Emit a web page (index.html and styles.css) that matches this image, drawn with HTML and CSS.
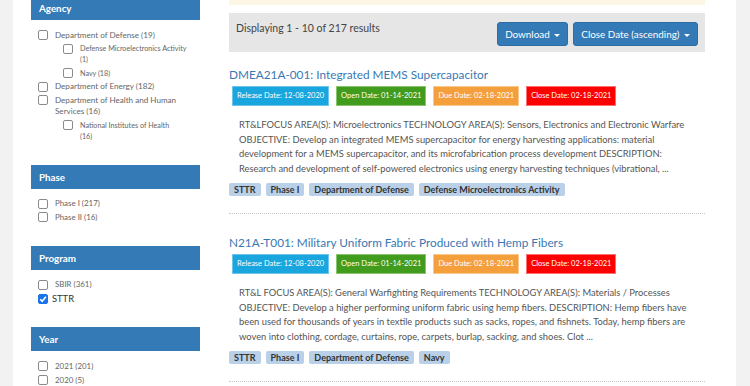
FILE: index.html
```html
<!DOCTYPE html>
<html>
<head>
  <title>Topic Search</title>
  <link rel="stylesheet" href="styles.css">
</head>
<body>

<div class="page">
  <div class="sidebar">

    <div class="panel panel-first">
      <div class="panel-heading">Agency</div>
      <ul class="facet">
        <li><span class="box"></span>Department of Defense (19)
          <ul class="facet sub">
            <li><span class="box"></span>Defense Microelectronics Activity<br>(1)</li>
            <li><span class="box"></span>Navy (18)</li>
          </ul>
        </li>
        <li><span class="box"></span>Department of Energy (182)</li>
        <li><span class="box"></span>Department of Health and Human Services (16)
          <ul class="facet sub">
            <li><span class="box"></span>National Institutes of Health<br>(16)</li>
          </ul>
        </li>
      </ul>
    </div>

    <div class="panel">
      <div class="panel-heading">Phase</div>
      <ul class="facet small">
        <li><span class="box"></span>Phase I (217)</li>
        <li><span class="box"></span>Phase II (16)</li>
      </ul>
    </div>

    <div class="panel">
      <div class="panel-heading">Program</div>
      <ul class="facet small">
        <li><span class="box"></span>SBIR (361)</li>
        <li class="checked"><span class="box"><svg viewBox="0 0 10 10" width="10" height="10"><path d="M2.2 5.2 L4.2 7.2 L7.9 2.8" fill="none" stroke="#fff" stroke-width="1.6"/></svg></span>STTR</li>
      </ul>
    </div>

    <div class="panel">
      <div class="panel-heading">Year</div>
      <ul class="facet small">
        <li><span class="box"></span>2021 (201)</li>
        <li><span class="box"></span>2020 (5)</li>
      </ul>
    </div>

  </div>

  <div class="main">
    <div class="notice"></div>

    <div class="toolbar">
      <span class="count">Displaying 1 - 10 of 217 results</span>
      <div class="actions">
        <button class="btn">Download <span class="caret"></span></button>
        <button class="btn">Close Date (ascending) <span class="caret"></span></button>
      </div>
    </div>

    <div class="result first">
      <a class="title" href="#">DMEA21A-001: Integrated MEMS Supercapacitor</a>
      <div class="dates">
        <span class="date release">Release Date: 12-08-2020</span>
        <span class="date open">Open Date: 01-14-2021</span>
        <span class="date due">Due Date: 02-18-2021</span>
        <span class="date close">Close Date: 02-18-2021</span>
      </div>
      <p class="desc">RT&amp;LFOCUS AREA(S): Microelectronics TECHNOLOGY AREA(S): Sensors, Electronics and Electronic Warfare OBJECTIVE: Develop an integrated MEMS supercapacitor for energy harvesting applications: material development for a MEMS supercapacitor, and its microfabrication process development DESCRIPTION: Research and development of self-powered electronics using energy harvesting techniques (vibrational, ...</p>
      <div class="tags">
        <span class="tag">STTR</span>
        <span class="tag">Phase I</span>
        <span class="tag">Department of Defense</span>
        <span class="tag">Defense Microelectronics Activity</span>
      </div>
    </div>

    <div class="result">
      <a class="title" href="#">N21A-T001: Military Uniform Fabric Produced with Hemp Fibers</a>
      <div class="dates">
        <span class="date release">Release Date: 12-08-2020</span>
        <span class="date open">Open Date: 01-14-2021</span>
        <span class="date due">Due Date: 02-18-2021</span>
        <span class="date close">Close Date: 02-18-2021</span>
      </div>
      <p class="desc">RT&amp;L FOCUS AREA(S): General Warfighting Requirements TECHNOLOGY AREA(S): Materials / Processes OBJECTIVE: Develop a higher performing uniform fabric using hemp fibers. DESCRIPTION: Hemp fibers have been used for thousands of years in textile products such as sacks, ropes, and fishnets. Today, hemp fibers are woven into clothing, cordage, curtains, rope, carpets, burlap, sacking, and shoes. Clot ...</p>
      <div class="tags">
        <span class="tag">STTR</span>
        <span class="tag">Phase I</span>
        <span class="tag">Department of Defense</span>
        <span class="tag">Navy</span>
      </div>
    </div>
  </div>
</div>

</body>
</html>
```

FILE: styles.css
```css
html, body { height: 100%; }
body { margin: 0; background: #f2f2f2; font-family: Lato, "Liberation Sans", sans-serif; color: #555; overflow: hidden; }
.page { display: flex; margin: 0 14px 0 13px; background: #fff; height: 100%; padding-left: 18px; }

.sidebar { width: 169px; flex: none; margin-right: 29px; }
.panel { margin-bottom: 23px; }
.panel-first { margin-top: -4px; }
.panel-heading { background: #337ab7; color: #fff; font-weight: bold; font-size: 9.8px; height: 24px; line-height: 24px; padding-left: 8px; }

.facet { list-style: none; margin: 0; padding: 7px 0 0 7px; font-size: 8.1px; line-height: 11px; color: #666; }
.facet li { position: relative; padding-left: 17px; margin-top: 2.6px; }
.facet.sub { padding: 0 0 0 8px; font-size: 7.2px; }
.facet.small { font-size: 7.9px; }
.box { position: absolute; left: 0; top: 0.5px; width: 8px; height: 8px; border: 1px solid #8a8a8a; border-radius: 2px; background: #fff; }
.facet li.checked { font-size: 9.4px; padding-left: 14px; color: #333; margin-top: 3px; }
.checked .box { background: #1a73e8; border-color: #1a73e8; }
.checked .box svg { position: absolute; left: -1px; top: -1px; }

.main { width: 476px; flex: none; }
.notice { height: 5px; background: #fcf6e4; }
.toolbar { margin-top: 8px; background: #e6e6e6; height: 39px; display: flex; align-items: center; justify-content: space-between; padding: 0 7px; }
.count { font-size: 10.5px; color: #444; margin-top: -10px; }
.actions { display: flex; gap: 5px; margin-top: 3px; }
.btn { background: #337ab7; border: 1px solid #2e6da4; border-radius: 3px; color: #fff; font-family: inherit; font-size: 9.9px; height: 24px; padding: 0 7px; }
.caret { display: inline-block; width: 0; height: 0; border-top: 3px solid #fff; border-left: 3px solid transparent; border-right: 3px solid transparent; vertical-align: middle; margin-left: 2px; }

.result { padding: 20px 0 17px; border-bottom: 1px dotted #c8c8c8; }
.result.first { padding-top: 14px; }
.title { display: block; font-size: 11.8px; line-height: 18px; color: #3a78b3; text-decoration: none; }
.dates { display: flex; gap: 7px; margin-top: 2px; padding-left: 3px; }
.date { font-size: 7.5px; line-height: 12px; padding: 3px 4px; color: #fff; border: 1px solid; white-space: nowrap; }
.release { background: #19a5dd; border-color: #6cc6ec; }
.open { background: #419b1d; border-color: #8ac46f; }
.due { background: #f59f3c; border-color: #f9c88d; }
.close { background: #fe0000; border-color: #ff7070; }
.desc { margin: 12px 0 0; padding: 0 6px 0 10px; font-size: 9.35px; line-height: 14.5px; color: #555; }
.tags { display: flex; gap: 5px; margin-top: 6.5px; }
.tag { background: #b9d0e8; color: #333; font-weight: bold; font-size: 9px; line-height: 13.5px; padding: 0 5px; border-radius: 2px; }
```
